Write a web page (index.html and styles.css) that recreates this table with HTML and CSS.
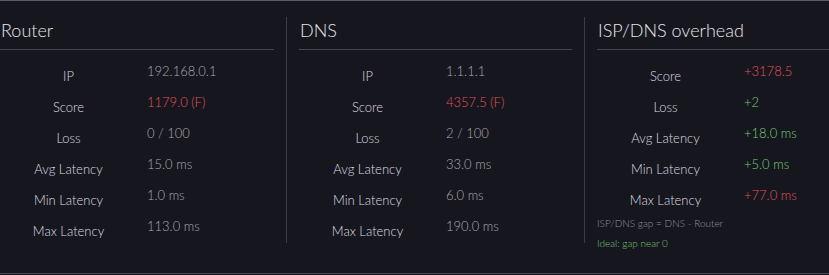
FILE: index.html
```html
<!DOCTYPE html>
<html lang="en">
<head>
  <meta charset="UTF-8" />
  <meta name="viewport" content="width=device-width, initial-scale=1.0" />
  <title>Network health</title>
  <link rel="stylesheet" href="styles.css">
</head>
<body>
  <div class="panel">
    <div class="cols">
      <div class="col">
        <h2>Router</h2>
        <div class="rows">
          <div class="row"><span class="lbl">IP</span><span class="val">192.168.0.1</span></div>
          <div class="row"><span class="lbl">Score</span><span class="val bad">1179.0 (F)</span></div>
          <div class="row"><span class="lbl">Loss</span><span class="val">0 / 100</span></div>
          <div class="row"><span class="lbl">Avg Latency</span><span class="val">15.0 ms</span></div>
          <div class="row"><span class="lbl">Min Latency</span><span class="val">1.0 ms</span></div>
          <div class="row"><span class="lbl">Max Latency</span><span class="val">113.0 ms</span></div>
        </div>
      </div>
      <div class="col">
        <h2>DNS</h2>
        <div class="rows">
          <div class="row"><span class="lbl">IP</span><span class="val">1.1.1.1</span></div>
          <div class="row"><span class="lbl">Score</span><span class="val bad">4357.5 (F)</span></div>
          <div class="row"><span class="lbl">Loss</span><span class="val">2 / 100</span></div>
          <div class="row"><span class="lbl">Avg Latency</span><span class="val">33.0 ms</span></div>
          <div class="row"><span class="lbl">Min Latency</span><span class="val">6.0 ms</span></div>
          <div class="row"><span class="lbl">Max Latency</span><span class="val">190.0 ms</span></div>
        </div>
      </div>
      <div class="col">
        <h2>ISP/DNS overhead</h2>
        <div class="rows">
          <div class="row"><span class="lbl">Score</span><span class="val bad">+3178.5</span></div>
          <div class="row"><span class="lbl">Loss</span><span class="val good">+2</span></div>
          <div class="row"><span class="lbl">Avg Latency</span><span class="val good">+18.0 ms</span></div>
          <div class="row"><span class="lbl">Min Latency</span><span class="val good">+5.0 ms</span></div>
          <div class="row"><span class="lbl">Max Latency</span><span class="val bad">+77.0 ms</span></div>
        </div>
        <p class="note first">ISP/DNS gap = DNS - Router</p>
        <p class="note good">Ideal: gap near 0</p>
      </div>
    </div>
  </div>
</body>
</html>
```

FILE: styles.css
```css
body {
  margin: 0;
  background: #16171e;
  font-family: Lato, 'Open Sans', sans-serif;
  font-weight: 300;
  color: #d6d6da;
  overflow: hidden;
}
.panel {
  height: 272px;
  border-top: 1px solid #5c5c60;
  border-bottom: 1px solid #4a4a4e;
  overflow: hidden;
}
.cols {
  display: flex;
  align-items: stretch;
  padding-top: 16px;
  width: 900px;
}
.col {
  flex: none;
  width: 273px;
  margin-left: 12px;
  padding-left: 12px;
  border-left: 1px solid #3c3d42;
  height: 226px;
}
.col:first-child {
  width: 274px;
  margin-left: 0;
  padding-left: 0;
  border-left: none;
}
h2 {
  margin: 0;
  font-size: 18px;
  font-weight: 300;
  line-height: 24px;
  padding: 1px 0 7px 1px;
  border-bottom: 1px solid #45464b;
  color: #e6e6ea;
}
.rows {
  padding-top: 13px;
}
.row {
  display: grid;
  grid-template-columns: 137px 1fr;
  height: 31px;
}
.lbl {
  text-align: center;
  font-size: 13px;
  line-height: 16px;
  padding-top: 5px;
  color: #dcdce0;
}
.val {
  padding-left: 10px;
  font-size: 13px;
  line-height: 16px;
  color: #a8a9b0;
}
.val.bad { color: #e2515c; }
.val.good { color: #78cc78; }
.note {
  margin: 0;
  font-size: 10px;
  line-height: 20px;
  color: #909198;
}
.note.first { margin-top: -5px; }
.note.good { color: #74c474; }
```
